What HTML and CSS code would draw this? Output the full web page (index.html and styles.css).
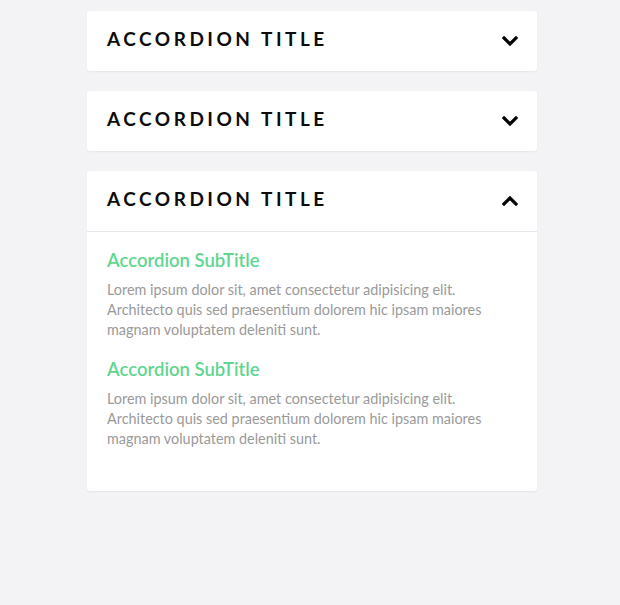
FILE: index.html
```html
<html>
    <head>
        <link rel="stylesheet" href="styles.css">
    </head>
    <body>
        <div class="accordion">
            <div class="item">
                <div class="item-head">
                    <span class="item-title">Accordion Title</span>
                    <svg class="chevron" viewBox="0 0 16 10" width="16" height="10"><path d="M2 2 L8 8 L14 2" /></svg>
                </div>
            </div>
            <div class="item">
                <div class="item-head">
                    <span class="item-title">Accordion Title</span>
                    <svg class="chevron" viewBox="0 0 16 10" width="16" height="10"><path d="M2 2 L8 8 L14 2" /></svg>
                </div>
            </div>
            <div class="item open">
                <div class="item-head">
                    <span class="item-title">Accordion Title</span>
                    <svg class="chevron" viewBox="0 0 16 10" width="16" height="10"><path d="M2 8 L8 2 L14 8" /></svg>
                </div>
                <div class="item-body">
                    <h3>Accordion SubTitle</h3>
                    <p>Lorem ipsum dolor sit, amet consectetur adipisicing elit. Architecto quis sed praesentium dolorem hic ipsam maiores magnam voluptatem deleniti sunt.</p>
                    <h3>Accordion SubTitle</h3>
                    <p>Lorem ipsum dolor sit, amet consectetur adipisicing elit. Architecto quis sed praesentium dolorem hic ipsam maiores magnam voluptatem deleniti sunt.</p>
                </div>
            </div>
        </div>
    </body>
</html>
```
FILE: styles.css
```css
:root {
    --c-bg: #f3f3f5;
    --c-card: #ffffff;
    --c-title: #0c0c0c;
    --c-accent: #5fd68f;
    --c-text: #9a9a9a;
    --c-line: #e8e8ec;
}

html, body {
    margin: 0;
    padding: 0;
}

body {
    background-color: var(--c-bg);
    font-family: Lato, "Noto Sans", sans-serif;
}

.accordion {
    width: 450px;
    margin: 11px 0 0 87px;
    display: flex;
    flex-direction: column;
    gap: 20px;
}

.item {
    background-color: var(--c-card);
    border-radius: 3px;
    box-shadow: 0 1px 2px rgba(0, 0, 0, 0.06);
}

.item-head {
    height: 60px;
    display: flex;
    align-items: center;
    justify-content: space-between;
    padding: 0 19px 0 20px;
    box-sizing: border-box;
}

.item.open .item-head {
    height: 61px;
    border-bottom: 1px solid var(--c-line);
}

.item-title {
    color: var(--c-title);
    font-size: 19px;
    font-weight: 700;
    text-transform: uppercase;
    letter-spacing: 3.5px;
    padding-bottom: 5px;
}

.chevron {
    margin-bottom: 1px;
}

.chevron path {
    fill: none;
    stroke: #000;
    stroke-width: 3.2;
    stroke-linecap: square;
}

.item-body {
    padding: 18px 20px 42px;
}

.item-body h3 {
    margin: 0 0 10px;
    color: var(--c-accent);
    font-size: 18.5px;
    line-height: 20px;
    font-weight: 600;
}

.item-body p {
    margin: 0 0 19px;
    color: var(--c-text);
    font-size: 14.4px;
    line-height: 20px;
}

.item-body p:last-child {
    margin-bottom: 0;
}
```
